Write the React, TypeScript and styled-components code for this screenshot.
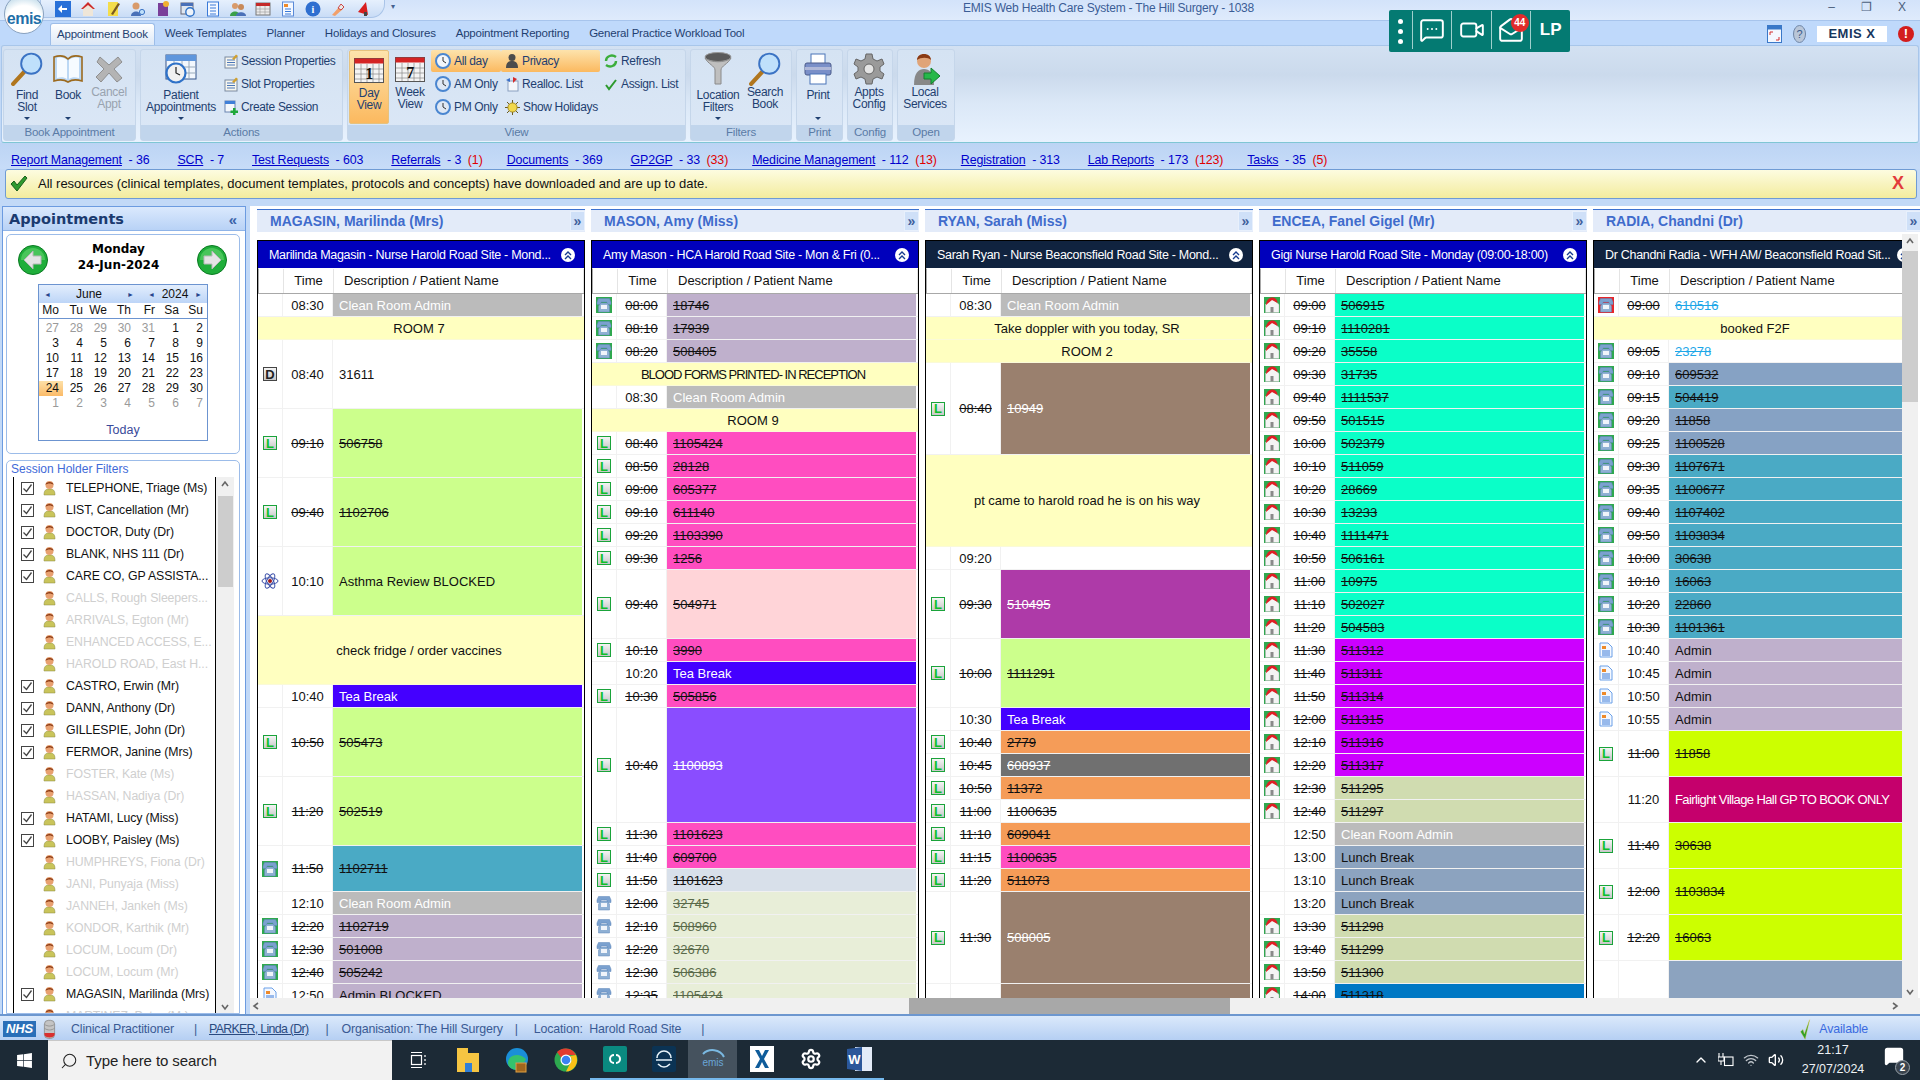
import React from "react";
import styled, { createGlobalStyle } from "styled-components";
import {
  ChevronUp,
  MailOpen,
  MessageSquareMore,
  Search,
  Settings,
  Video,
  Volume2,
  Wifi
} from "lucide-react";
import { FaWindows } from "react-icons/fa";

const GlobalStyle = createGlobalStyle`
  html, body {
    margin: 0;
    padding: 0;
    overflow: hidden;
    background: #c2d9f7;
  }
  * { box-sizing: border-box; }
`;

const FONT = `"Liberation Sans", Arial, sans-serif`;
const WIDE = `"DejaVu Sans", Verdana, sans-serif`;

/* ---------- shell ---------- */

const Page = styled.div`
  position: relative;
  width: 1920px;
  height: 1080px;
  display: flex;
  flex-direction: column;
  overflow: hidden;
  font-family: ${FONT};
  font-size: 13px;
  background: #c2d9f7;
`;

const TitleBar = styled.div`
  height: 20px;
  flex: none;
  display: flex;
  align-items: flex-start;
  padding-left: 40px;
  background: linear-gradient(#d3e3fa, #dfebfc);
`;

const QuickBar = styled.div`
  width: 345px;
  height: 18px;
  display: flex;
  align-items: center;
  gap: 9px;
  padding-left: 14px;
  border: 1px solid #a9c4e8;
  border-top: none;
  border-radius: 0 0 14px 0;
  background: linear-gradient(#e6f0fd, #c9dcf6);
`;

const QuickArrow = styled.span`
  margin: 0 0 0 6px;
  font-size: 8px;
  color: #44618f;
  line-height: 14px;
`;

const WindowTitle = styled.div`
  margin-left: 568px;
  width: 300px;
  line-height: 16px;
  font-size: 12px;
  letter-spacing: -0.2px;
  color: #3b5d96;
  white-space: nowrap;
`;

const WindowControls = styled.div`
  margin-left: auto;
  display: flex;
  gap: 26px;
  padding-right: 14px;
  color: #4b5f7d;
  font-size: 12px;
  line-height: 15px;
`;

const TabRow = styled.div`
  height: 25px;
  flex: none;
  display: flex;
  align-items: flex-end;
  padding-left: 50px;
  border-top: 1px solid #a7c4ec;
  background: #bfd9fb;
`;

const Tab = styled.div<{ $active?: boolean }>`
  height: 22px;
  padding: 0 ${p => (p.$active ? 6 : 10)}px;
  line-height: 21px;
  font-size: 11.5px;
  letter-spacing: -0.2px;
  white-space: nowrap;
  color: #1f3f70;
  ${p =>
    p.$active &&
    `
    background: linear-gradient(#ffffff, #dce8f7);
    border: 1px solid #9dbde8;
    border-bottom: none;
    border-radius: 3px 3px 0 0;
  `}
`;

const TabTools = styled.div`
  margin-left: auto;
  height: 22px;
  display: flex;
  align-items: center;
  gap: 11px;
  padding-right: 6px;
`;

const EmisXBox = styled.div`
  width: 70px;
  height: 16px;
  background: #fff;
  text-align: center;
  line-height: 16px;
  font-size: 13px;
  font-weight: 700;
  letter-spacing: 0.5px;
  color: #17375e;
`;

const AlertDot = styled.div`
  width: 16px;
  height: 16px;
  border-radius: 50%;
  background: #d31d1d;
  color: #fff;
  text-align: center;
  font-weight: 700;
  font-size: 13px;
  line-height: 16px;
`;

const Orb = styled.div`
  position: absolute;
  left: 4px;
  top: -6px;
  width: 40px;
  height: 40px;
  border-radius: 50%;
  border: 1px solid #8aa2bf;
  background: radial-gradient(circle at 50% 80%, #ffffff 0 55%, #9dc6dd 100%);
  text-align: center;
  font-size: 16px;
  line-height: 48px;
  letter-spacing: -0.5px;
  font-weight: 700;
  color: #1f6fa8;
`;

const TealWidget = styled.div`
  position: absolute;
  left: 1389px;
  top: 10px;
  width: 181px;
  height: 42px;
  display: flex;
  background: #047a72;
  border-radius: 2px;
  color: #fff;
`;

const TealDots = styled.div`
  width: 23px;
  display: flex;
  flex-direction: column;
  align-items: center;
  justify-content: center;
  gap: 5px;
`;

const TealDot = styled.span`
  width: 5px;
  height: 5px;
  border-radius: 50%;
  background: #fff;
`;

const TealCell = styled.div`
  position: relative;
  width: 40px;
  display: flex;
  align-items: center;
  justify-content: center;
  border-left: 1px solid #9fd0cc;
  margin: 1px 0 3px;
  font-size: 17px;
  font-weight: 700;
`;

const TealBadge = styled.span`
  position: absolute;
  left: 19px;
  top: 3px;
  width: 18px;
  height: 18px;
  border-radius: 50%;
  background: #e02b2b;
  font-size: 10px;
  line-height: 18px;
  text-align: center;
`;

/* ---------- ribbon ---------- */

const Ribbon = styled.div`
  height: 98px;
  flex: none;
  margin: 0 1px 0 1px;
  padding: 3px 0 2px 1px;
  display: flex;
  gap: 4px;
  border: 1px solid #a8c6ea;
  border-bottom: 1px solid #7fc6d4;
  border-radius: 3px;
  background: linear-gradient(#d3e1f2 0, #cbdaec 30%, #dbe8f7 60%, #e8f2fe 100%);
`;

const Group = styled.div<{ $w: number }>`
  width: ${p => p.$w}px;
  height: 92px;
  flex: none;
  display: flex;
  flex-direction: column;
  border: 1px solid #c5d6ea;
  border-radius: 3px;
  background: linear-gradient(#d5e3f3, #dbe7f6);
`;

const GroupBody = styled.div`
  flex: 1;
  display: flex;
  padding: 0 0 0 1px;
`;

const GroupLabel = styled.div`
  height: 15px;
  text-align: center;
  line-height: 15px;
  font-size: 11.5px;
  letter-spacing: -0.2px;
  color: #5a7ba6;
  background: #c1d5ec;
`;

const BigButton = styled.div<{ $w: number; $on?: boolean; $off?: boolean }>`
  width: ${p => p.$w}px;
  height: 74px;
  flex: none;
  display: flex;
  flex-direction: column;
  align-items: center;
  padding-top: 2px;
  font-size: 12px;
  letter-spacing: -0.3px;
  line-height: 12px;
  text-align: center;
  color: ${p => (p.$off ? "#98a3af" : "#1f3f70")};
  ${p =>
    p.$on &&
    `
    background: linear-gradient(#fde3ac, #fbb95f);
    border: 1px solid #e6c27e;
    border-radius: 2px;
  `}
`;

const BigIcon = styled.div<{ $low?: boolean }>`
  height: 34px;
  flex: none;
  display: flex;
  align-items: center;
  justify-content: center;
  margin-bottom: ${p => (p.$low ? 3 : 0)}px;
`;

const DropArrow = styled.span`
  width: 0;
  height: 0;
  margin-top: 4px;
  border-left: 3px solid transparent;
  border-right: 3px solid transparent;
  border-top: 3px solid #1f3f70;
`;

const SmallColumn = styled.div<{ $w: number }>`
  width: ${p => p.$w}px;
  flex: none;
  display: flex;
  flex-direction: column;
  gap: 1px;
`;

const SmallButton = styled.div<{ $on?: boolean }>`
  height: 22px;
  display: flex;
  align-items: center;
  gap: 3px;
  padding-left: 4px;
  font-size: 12px;
  letter-spacing: -0.35px;
  white-space: nowrap;
  color: #1f3f70;
  ${p =>
    p.$on &&
    `
    background: linear-gradient(#fde3ac, #fbb95f);
    border-radius: 2px;
  `}
`;

/* ---------- message links ---------- */

const LinkRow = styled.div`
  height: 26px;
  flex: none;
  display: flex;
  align-items: flex-end;
  padding: 0 0 2px 11px;
  font-size: 12.4px;
  letter-spacing: -0.12px;
  background: linear-gradient(#bcd4f4, #c7dcf8);
  color: #0000cc;
`;

const LinkItem = styled.span<{ $urgent?: boolean }>`
  margin-right: ${p => (p.$urgent ? 24 : 28)}px;
  white-space: pre;
`;

const MsgLink = styled.a`
  color: #0000cc;
  text-decoration: underline;
`;

const Urgent = styled.span`
  color: #e00000;
`;

const Banner = styled.div`
  height: 30px;
  flex: none;
  margin: 0 3px 0 5px;
  display: flex;
  align-items: center;
  padding: 0 12px 2px 4px;
  gap: 10px;
  border: 1px solid #6f9bd4;
  border-radius: 3px;
  background: linear-gradient(#fdfce0, #f3ec9e);
  color: #111;
  font-size: 13px;
`;

const BannerClose = styled.span`
  margin-left: auto;
  color: #e23b3b;
  font-size: 18px;
  font-weight: 700;
`;

/* ---------- work area ---------- */

const Work = styled.div`
  flex: 1;
  min-height: 0;
  display: flex;
  padding-top: 7px;
`;

const Sidebar = styled.div`
  width: 244px;
  margin-left: 2px;
  flex: none;
  height: 809px;
  display: flex;
  flex-direction: column;
  border: 1px solid #6c9be0;
  background: #fff;
`;

const SideHead = styled.div`
  height: 24px;
  flex: none;
  display: flex;
  align-items: center;
  justify-content: space-between;
  padding: 1px 8px 0 6px;
  border-bottom: 1px solid #8fb4e8;
  background: linear-gradient(#dbe9fd, #b8d2f6);
  font-family: ${WIDE};
  font-weight: 700;
  font-size: 14.5px;
  color: #1b3a6f;
`;

const SideChevron = styled.span`
  font-family: ${FONT};
  font-size: 15px;
  color: #3a62a8;
`;

const DateCard = styled.div`
  height: 220px;
  flex: none;
  margin: 3px 5px 6px 3px;
  padding: 6px 0 0 10px;
  border: 1px solid #9cbce9;
  border-radius: 5px;
`;

const DateHead = styled.div`
  width: 210px;
  height: 43px;
  display: flex;
  align-items: flex-start;
  justify-content: space-between;
  padding: 0 0 0 1px;
`;

const ArrowSlot = styled.div`
  margin-top: 4px;
  line-height: 0;
`;

const DateText = styled.div`
  margin-right: 8px;
  text-align: center;
  font-family: ${WIDE};
  font-weight: 700;
  font-size: 12px;
  line-height: 16px;
  color: #000;
`;

const Calendar = styled.div`
  width: 170px;
  height: 157px;
  margin-left: 21px;
  border: 1px solid #6c94d0;
`;

const MonthBar = styled.div`
  height: 18px;
  display: flex;
  align-items: center;
  justify-content: space-between;
  padding: 0 5px 0 5px;
  background: linear-gradient(#e3eefd, #bdd5f7);
  font-size: 12px;
  color: #111;
`;

const MonthPart = styled.div<{ $w: number }>`
  width: ${p => p.$w}px;
  display: flex;
  align-items: center;
  justify-content: space-between;
`;

const MonthArrow = styled.span`
  font-size: 7px;
  color: #27458c;
`;

const DayGrid = styled.div<{ $head?: boolean }>`
  display: grid;
  grid-template-columns: repeat(7, 24px);
  grid-auto-rows: 15px;
  ${p => p.$head && "height: 16px; border-bottom: 1px solid #6c94d0;"}
  ${p => !p.$head && "padding-top: 2px;"}
`;

const Day = styled.div<{ $muted?: boolean; $today?: boolean }>`
  text-align: right;
  padding-right: 4px;
  font-size: 12px;
  line-height: 15px;
  color: ${p => (p.$muted ? "#9a9a9a" : "#111")};
  ${p => p.$today && "background: linear-gradient(#fde0a8, #fbbb68);"}
`;

const TodayLink = styled.div`
  margin-top: 12px;
  text-align: center;
  font-size: 12.5px;
  color: #3a4a9a;
`;

const FilterCard = styled.div`
  flex: 1;
  min-height: 0;
  margin: 0 5px 0 3px;
  display: flex;
  flex-direction: column;
  border: 1px solid #9cbce9;
  border-radius: 5px 5px 0 0;
  overflow: hidden;
`;

const FilterTitle = styled.div`
  height: 16px;
  flex: none;
  padding-left: 4px;
  font-size: 12px;
  line-height: 17px;
  color: #3f6ad8;
`;

const FilterBody = styled.div`
  flex: 1;
  min-height: 0;
  display: flex;
  margin-left: 6px;
`;

const HolderList = styled.div`
  width: 203px;
  flex: none;
  overflow: hidden;
  border-left: 1px solid #000;
  border-right: 1px solid #000;
`;

const Holder = styled.div<{ $off?: boolean }>`
  height: 22px;
  display: flex;
  align-items: center;
  padding-left: 7px;
  font-size: 12.3px;
  letter-spacing: -0.1px;
  white-space: nowrap;
  color: ${p => (p.$off ? "#cfcfcf" : "#111")};
`;

const Tick = styled.span<{ $show: boolean }>`
  width: 13px;
  height: 13px;
  flex: none;
  margin-right: 9px;
  display: flex;
  align-items: center;
  justify-content: center;
  ${p => p.$show && "border: 1px solid #444;"}
`;

const HolderName = styled.span`
  margin-left: 10px;
`;

const SideScroll = styled.div`
  width: 18px;
  flex: none;
  display: flex;
  flex-direction: column;
  align-items: center;
  background: #f0f0f0;
  color: #555;
`;

const SideThumb = styled.div`
  width: 15px;
  height: 91px;
  margin-top: 6px;
  background: #cdcdcd;
`;

const GridArea = styled.div`
  flex: 1;
  min-width: 0;
  margin-left: 4px;
  display: flex;
  flex-direction: column;
  background: #fff;
  height: 808px;
`;

const NameRow = styled.div`
  height: 28px;
  flex: none;
  display: flex;
  gap: 6px;
  padding-left: 7px;
  overflow: hidden;
`;

const NameHead = styled.div`
  width: 328px;
  height: 23px;
  margin-top: 3px;
  flex: none;
  display: flex;
  align-items: center;
  justify-content: space-between;
  padding-left: 13px;
  border-top: 1px solid #3b71d0;
  background: #e3ebf9;
  font-weight: 700;
  font-size: 14px;
  color: #3f6bcc;
`;

const NameChevron = styled.span`
  width: 15px;
  height: 20px;
  text-align: center;
  line-height: 18px;
  font-size: 14px;
  background: #cfe0f8;
  border: 1px solid #e8f0fc;
  color: #3f5f9c;
`;

const BodyRow = styled.div`
  flex: 1;
  min-height: 0;
  display: flex;
`;

const ColumnsClip = styled.div`
  flex: 1;
  min-width: 0;
  display: flex;
  gap: 6px;
  padding: 6px 0 0 7px;
  overflow: hidden;
`;

const VScroll = styled.div`
  width: 16px;
  margin-right: 2px;
  flex: none;
  display: flex;
  flex-direction: column;
  align-items: center;
  background: #f0f0f0;
  color: #555;
`;

const VThumb = styled.div`
  width: 16px;
  height: 151px;
  margin-top: 4px;
  background: #cdcdcd;
`;

const ScrollGap = styled.div`
  flex: 1;
`;

const ScrollArrow = styled.div`
  height: 13px;
  display: flex;
  align-items: center;
  justify-content: center;
`;

const HScroll = styled.div`
  height: 16px;
  flex: none;
  display: flex;
  align-items: center;
  background: #f0f0f0;
  color: #555;
`;

const HThumb = styled.div`
  width: 321px;
  height: 16px;
  margin-left: 648px;
  background: #a8a8a8;
`;

const HArrowRight = styled.div`
  margin-left: auto;
  margin-right: 20px;
  display: flex;
`;

const HArrowLeft = styled.div`
  margin-left: 1px;
  display: flex;
`;

const Column = styled.div`
  width: 328px;
  flex: none;
  display: flex;
  flex-direction: column;
  overflow: hidden;
  border-left: 1px solid #000;
  border-right: 1px solid #000;
  background: #fff;
`;

const SlotTitle = styled.div<{ $navy?: boolean }>`
  height: 28px;
  flex: none;
  display: flex;
  align-items: center;
  justify-content: space-between;
  padding: 0 9px 0 11px;
  border-top: 1px solid #000;
  color: #fff;
  font-size: 12.5px;
  letter-spacing: -0.3px;
  white-space: nowrap;
  background: ${p => (p.$navy ? "#10233f" : "#0000bc")};
`;

const Collapse = styled.span`
  width: 14px;
  height: 14px;
  flex: none;
  border-radius: 50%;
  background: #fff;
  display: flex;
  align-items: center;
  justify-content: center;
`;

const HeadRow = styled.div`
  height: 26px;
  flex: none;
  display: grid;
  grid-template-columns: 25px 50px 1fr;
  border-top: 1px solid #fff;
  border-left: 1px solid #a8a8a8;
  border-bottom: 1px solid #a8a8a8;
  font-size: 13px;
  line-height: 24px;
  color: #111;
`;

const HeadCell = styled.div<{ $pad?: number }>`
  border-right: 1px solid #e4e4e4;
  text-align: ${p => (p.$pad ? "left" : "center")};
  padding-left: ${p => p.$pad ?? 0}px;
`;

const Slot = styled.div<{ $span: number }>`
  height: ${p => p.$span * 23}px;
  flex: none;
  display: grid;
  grid-template-columns: 25px 50px 1fr;
  border-bottom: 1px solid #f1f1f1;
`;

const IconCell = styled.div`
  display: flex;
  align-items: center;
  justify-content: center;
  border-right: 1px solid #f1f1f1;
`;

const TimeCell = styled.div<{ $struck?: boolean }>`
  display: flex;
  align-items: center;
  justify-content: center;
  border-right: 1px solid #f1f1f1;
  color: #111;
  font-size: 13px;
  ${p => p.$struck && "text-decoration: line-through;"}
`;

const DescCell = styled.div<{ $bg: string; $fg: string; $struck?: boolean; $tight?: boolean }>`
  display: flex;
  align-items: center;
  margin-right: 2px;
  padding-left: 6px;
  background: ${p => p.$bg};
  color: ${p => p.$fg};
  font-size: 13px;
  white-space: nowrap;
  ${p => p.$tight && "letter-spacing: -0.6px;"}
  ${p => p.$struck && "text-decoration: line-through;"}
`;

const NoteRow = styled.div<{ $span: number; $tight?: boolean }>`
  height: ${p => p.$span * 23}px;
  flex: none;
  display: flex;
  align-items: center;
  justify-content: center;
  padding-right: 4px;
  background: #ffffc0;
  border-bottom: 1px solid #fafad8;
  color: #111;
  font-size: 13px;
  ${p => p.$tight && "letter-spacing: -1px;"}
`;

const LetterIcon = styled.span<{ $grey?: boolean }>`
  width: 14px;
  height: 14px;
  display: flex;
  align-items: center;
  justify-content: center;
  border: 1px solid ${p => (p.$grey ? "#444" : "#1aa33a")};
  background: linear-gradient(#f4f4f4, #c8c8c8);
  font-size: 13px;
  font-weight: 700;
  color: ${p => (p.$grey ? "#222" : "#0cc02a")};
`;

/* ---------- status and task bars ---------- */

const StatusBar = styled.div`
  height: 26px;
  flex: none;
  display: flex;
  align-items: center;
  padding: 2px 52px 0 3px;
  border-top: 2px solid #6d97cf;
  background: linear-gradient(#dbe9fb, #b5cff3);
  font-size: 12.4px;
  letter-spacing: -0.15px;
  color: #3a5a94;
`;

const NhsBox = styled.span`
  width: 33px;
  height: 16px;
  flex: none;
  margin-right: 6px;
  background: #2a6fb8;
  color: #fff;
  font-weight: 700;
  font-style: italic;
  font-size: 13px;
  line-height: 16px;
  text-align: center;
`;

const StatusText = styled.span<{ $ml: number }>`
  margin-left: ${p => p.$ml}px;
  white-space: pre;
`;

const StatusLink = styled(StatusText)`
  text-decoration: underline;
  letter-spacing: -0.7px;
  color: #2a4a80;
`;

const StatusAvailable = styled.span`
  margin-left: auto;
  display: flex;
  align-items: center;
  gap: 7px;
  color: #3a6ae0;
`;

const TaskBar = styled.div`
  height: 40px;
  flex: none;
  display: flex;
  align-items: center;
  background: #1c2a36;
  color: #fff;
`;

const StartButton = styled.div`
  width: 48px;
  height: 40px;
  flex: none;
  display: flex;
  align-items: center;
  justify-content: center;
`;

const SearchBox = styled.div`
  width: 344px;
  height: 40px;
  flex: none;
  display: flex;
  align-items: center;
  gap: 8px;
  padding-left: 12px;
  background: #f2f2f2;
  border-top: 1px solid #c8c8c8;
  color: #222;
  font-size: 15px;
  letter-spacing: -0.1px;
`;

const TaskIcons = styled.div`
  display: flex;
  margin-left: 2px;
`;

const TaskSlot = styled.div<{ $w?: number; $run?: boolean; $active?: boolean }>`
  width: ${p => p.$w ?? 49}px;
  height: 40px;
  display: flex;
  align-items: center;
  justify-content: center;
  ${p => p.$active && "background: #45525e;"}
  ${p => p.$run && "border-bottom: 2px solid #76b9ed;"}
`;

const Tray = styled.div`
  margin-left: auto;
  display: flex;
  align-items: center;
  gap: 9px;
  padding-right: 12px;
`;

const Clock = styled.div`
  width: 72px;
  margin-left: 4px;
  text-align: center;
  font-size: 12.5px;
  line-height: 19px;
  color: #eef2f5;
`;

const NotifyIcon = styled.div`
  position: relative;
  width: 24px;
  height: 28px;
  margin-left: 6px;
`;

const NotifyBadge = styled.span`
  position: absolute;
  right: -2px;
  bottom: -1px;
  width: 15px;
  height: 15px;
  border-radius: 50%;
  background: #3a444e;
  border: 1px solid #9aa3ab;
  font-size: 10px;
  font-weight: 700;
  line-height: 13px;
  text-align: center;
`;

/* ---------- drawn icons ---------- */

const PhoneIcon = ({ red, plain }: { red?: boolean; plain?: boolean }) => (
  <svg width="16" height="16" viewBox="0 0 16 16">
    {!plain && <rect width="16" height="16" fill={red ? "#e6252a" : "#2fa84f"} />}
    <path d="M1 5 L2.5 1.5 H13.5 L15 5 V7.5 H11 V5 H5 V7.5 H1 Z" fill="#7ba1cf" stroke="#5f86b8" strokeWidth="0.5" />
    <path d="M2.5 9 L5 6 H11 L13.5 9 V15 H2.5 Z" fill="#8fb0d4" stroke="#5f86b8" strokeWidth="0.5" />
    <rect x="5" y="8" width="6" height="4" fill="#f0f4fa" />
  </svg>
);

const HouseIcon = () => (
  <svg width="16" height="16" viewBox="0 0 16 16">
    <rect width="16" height="16" fill="#2fa84f" />
    <path d="M8 1 L15 7.5 V15.5 H1.5 V7.5 Z" fill="#f4f4f4" stroke="#b8b8b8" strokeWidth="0.5" />
    <path d="M2 8 C2 3.5 5 0.5 8 0.5 C11 0.5 13.5 2.5 13.5 6 L8 3 Z" fill="#e01f25" />
    <rect x="6.5" y="10" width="3" height="5.5" fill="#8a8a8a" />
  </svg>
);

const AtomIcon = () => (
  <svg width="18" height="18" viewBox="0 0 18 18" fill="none" stroke="#3a4ea8" strokeWidth="1">
    <ellipse cx="9" cy="9" rx="8" ry="3.2" transform="rotate(60 9 9)" />
    <ellipse cx="9" cy="9" rx="8" ry="3.2" transform="rotate(-60 9 9)" />
    <ellipse cx="9" cy="9" rx="8" ry="3.2" />
    <circle cx="9" cy="9" r="2" fill="#a01818" stroke="none" />
  </svg>
);

const DocIcon = () => (
  <svg width="14" height="16" viewBox="0 0 14 16">
    <path d="M1 1 H9 L13 5 V15 H1 Z" fill="#f4f8ff" stroke="#6aa0e8" />
    <rect x="3" y="4" width="4" height="3" fill="#ee8a2a" />
    <path d="M3 9 H11 M3 11 H11 M3 13 H11" stroke="#3a7ad8" />
  </svg>
);

const ChevronsUp = () => (
  <svg width="10" height="10" viewBox="0 0 10 10" fill="none" stroke="#173c8f" strokeWidth="1.4">
    <path d="M2 5 L5 2 L8 5 M2 9 L5 6 L8 9" />
  </svg>
);

const Caret = ({ dir }: { dir: "up" | "down" | "left" | "right" }) => {
  const d = {
    up: "M2 7 L5 3 L8 7",
    down: "M2 3 L5 7 L8 3",
    left: "M7 2 L3 5 L7 8",
    right: "M3 2 L7 5 L3 8"
  }[dir];
  return (
    <svg width="10" height="10" viewBox="0 0 10 10" fill="none" stroke="#666" strokeWidth="1.6">
      <path d={d} />
    </svg>
  );
};

const UserIcon = () => (
  <svg width="13" height="16" viewBox="0 0 13 16">
    <path d="M1 15 C1 10 3 9 6.5 9 C10 9 12 10 12 15 Z" fill="#c9c45a" stroke="#8a8a40" strokeWidth="0.5" />
    <circle cx="6.5" cy="5" r="4" fill="#e8a070" />
    <path d="M2.5 5 C2.5 1 10.5 1 10.5 5 C9 3 4 3 2.5 5 Z" fill="#8a3a14" />
  </svg>
);

const CheckMark = () => (
  <svg width="11" height="11" viewBox="0 0 11 11" fill="none" stroke="#444" strokeWidth="1.3">
    <path d="M1.5 5.5 L4.5 8.5 L9.5 1.5" />
  </svg>
);

const GreenArrow = ({ right }: { right?: boolean }) => (
  <svg width="30" height="30" viewBox="0 0 30 30">
    <circle cx="15" cy="15" r="14.5" fill="#1fae3a" stroke="#0a7a22" />
    <path d="M3 15 A12 12 0 0 1 27 15 Z" fill="#66d36f" opacity="0.6" />
    <path
      d={right ? "M7 11 H15 V6 L24 15 L15 24 V19 H7 Z" : "M23 11 H15 V6 L6 15 L15 24 V19 H23 Z"}
      fill="#e4e4e4"
      stroke="#b8b8b8"
    />
  </svg>
);

const Lens = ({ size = 34 }: { size?: number }) => (
  <svg width={size} height={size} viewBox="0 0 32 32">
    <path d="M14 18 L3 30" stroke="#b0761e" strokeWidth="4" strokeLinecap="round" />
    <circle cx="20" cy="11" r="9.5" fill="#bfe0fb" stroke="#3b73c4" strokeWidth="1.8" />
  </svg>
);

const BookIcon = () => (
  <svg width="32" height="32" viewBox="0 0 32 32">
    <path d="M2 4 C8 2 13 3 16 6 C19 3 24 2 30 4 V28 C24 26 19 27 16 29 C13 27 8 26 2 28 Z" fill="#bcd8f4" stroke="#9c6a1e" strokeWidth="1.6" />
    <path d="M5 5 C9 4 13 5 15 7 V26 C12 24 9 24 5 25 Z M27 5 C23 4 19 5 17 7 V26 C20 24 23 24 27 25 Z" fill="#f6fbff" />
  </svg>
);

const CrossIcon = () => (
  <svg width="30" height="30" viewBox="0 0 30 30">
    <path d="M6 3 L15 11 L24 3 L28 8 L20 15 L28 24 L23 28 L15 19 L7 28 L2 23 L10 15 L3 8 Z" fill="#b4b4b4" stroke="#8f8f8f" />
  </svg>
);

const CalendarClock = () => (
  <svg width="32" height="30" viewBox="0 0 32 30">
    <rect x="1" y="1" width="30" height="24" fill="#f2f7fd" stroke="#34558c" />
    <rect x="1" y="1" width="30" height="6" fill="#5f96dc" />
    <path d="M1 13 H31 M1 19 H31 M9 7 V25 M17 7 V25 M24 7 V25" stroke="#9ab" />
    <circle cx="11" cy="19" r="9.5" fill="#f1f1f1" stroke="#2f72c8" strokeWidth="2.2" />
    <path d="M11 13 V19 L15 21" stroke="#222" strokeWidth="1.2" fill="none" />
  </svg>
);

const PlannerIcon = ({ label }: { label: string }) => (
  <svg width="30" height="25" viewBox="0 0 30 25">
    <rect x="0.5" y="0.5" width="29" height="24" fill="#f4f4f4" stroke="#555" />
    <rect x="0.5" y="0.5" width="29" height="5" fill="#d42424" />
    <path d="M1 11 H29 M1 16 H29 M1 21 H29 M7 6 V24 M13 6 V24 M19 6 V24 M25 6 V24" stroke="#888" strokeWidth="0.7" />
    <text x="15" y="20.5" textAnchor="middle" fontSize="16" fontWeight="700" fontFamily="Liberation Serif, serif" fill="#111">
      {label}
    </text>
  </svg>
);

const SlotProps = () => (
  <svg width="14" height="15" viewBox="0 0 14 15">
    <rect x="1" y="3" width="12" height="11" fill="#f6f6f0" stroke="#7a8aa0" />
    <path d="M3 6 H11 M3 8.5 H11 M3 11 H11" stroke="#4a76b8" />
    <path d="M8 5 L12 0.5 L14 2 L10 6 Z" fill="#d0a030" />
  </svg>
);

const CreateIcon = () => (
  <svg width="14" height="15" viewBox="0 0 14 15">
    <rect x="1" y="1" width="10" height="11" fill="#f4f7fb" stroke="#6a84b0" />
    <rect x="1" y="1" width="10" height="3" fill="#3f7fd8" />
    <path d="M9 8 H11.5 V10.5 H14 V13 H11.5 V15 H9 V13 H6.5 V10.5 H9 Z" fill="#1fa83a" />
  </svg>
);

const ClockIcon = ({ half }: { half?: boolean }) => (
  <svg width="16" height="16" viewBox="0 0 16 16">
    <circle cx="8" cy="8" r="7" fill={half ? "#dfe8f4" : "#f2f6fb"} stroke="#4a86d0" strokeWidth="2" />
    <path d="M8 4 V8 L11 10" stroke="#333" fill="none" />
  </svg>
);

const PrivacyIcon = () => (
  <svg width="14" height="16" viewBox="0 0 14 16">
    <circle cx="7" cy="4.5" r="3.5" fill="#4c4c4c" />
    <path d="M1 15 C1 9 4 8 7 8 C10 8 13 9 13 15 Z" fill="#4c4c4c" />
  </svg>
);

const ReallocIcon = () => (
  <svg width="14" height="15" viewBox="0 0 14 15">
    <rect x="3" y="4" width="10" height="10" fill="#f4f7fb" stroke="#8aa0c0" />
    <path d="M1 3 L5 1 L5 5 Z" fill="#3a6fc8" />
    <path d="M12 2 L8 0 L8 6 Z" fill="#d42c2c" />
  </svg>
);

const SunIcon = () => (
  <svg width="15" height="15" viewBox="0 0 15 15">
    <path d="M7.5 0 V15 M0 7.5 H15 M2 2 L13 13 M13 2 L2 13" stroke="#6a5a20" />
    <circle cx="7.5" cy="7.5" r="4.6" fill="#f2d84a" stroke="#a58a20" />
  </svg>
);

const RefreshIcon = () => (
  <svg width="14" height="16" viewBox="0 0 14 16" fill="none" stroke="#3cae3c" strokeWidth="2.4">
    <path d="M2 8 C2 3 8 1 12 4" />
    <path d="M12 8 C12 13 6 15 2 12" />
  </svg>
);

const AssignTick = () => (
  <svg width="14" height="13" viewBox="0 0 14 13" fill="none" stroke="#2d9a2d" strokeWidth="2">
    <path d="M2 7 L5 11 L12 2" />
  </svg>
);

const FunnelIcon = () => (
  <svg width="30" height="34" viewBox="0 0 30 34">
    <ellipse cx="15" cy="5" rx="13" ry="4.5" fill="#5a5a5a" stroke="#999" />
    <path d="M2 6 C5 12 12 14 12 18 V32 H18 V18 C18 14 25 12 28 6 C22 11 8 11 2 6 Z" fill="#bfbfbf" stroke="#8a8a8a" />
  </svg>
);

const PrinterIcon = () => (
  <svg width="28" height="32" viewBox="0 0 28 32">
    <rect x="7" y="1" width="14" height="11" fill="#fff" stroke="#4b74b8" />
    <rect x="1" y="10" width="26" height="12" rx="2" fill="#7a8fc8" stroke="#4b5a8a" />
    <rect x="1" y="14" width="26" height="3" fill="#b0b8d8" />
    <rect x="6" y="21" width="16" height="10" fill="#fff" stroke="#4b74b8" />
  </svg>
);

const GearIcon = () => (
  <svg width="32" height="32" viewBox="0 0 32 32">
    <path
      d="M13 1 H19 L20 6 L24 8 L29 6 L31 11 L27 14 V18 L31 21 L29 26 L24 24 L20 26 L19 31 H13 L12 26 L8 24 L3 26 L1 21 L5 18 V14 L1 11 L3 6 L8 8 L12 6 Z"
      fill="#9a9a9a"
      stroke="#666"
    />
    <circle cx="16" cy="16" r="5" fill="#e4e4e4" stroke="#666" />
  </svg>
);

const LocalIcon = () => (
  <svg width="30" height="34" viewBox="0 0 30 34">
    <path d="M4 33 C4 20 9 17 14 17 C19 17 24 20 24 33 Z" fill="#888" />
    <circle cx="14" cy="9" r="7" fill="#e0a478" />
    <path d="M7 8 C7 0 21 0 21 8 C18 5 11 5 7 8 Z" fill="#8a3a14" />
    <path d="M14 21 H21 V16 L30 24 L21 32 V27 H14 Z" fill="#26b84a" stroke="#14802e" />
  </svg>
);

const QuickIcon = ({ kind }: { kind: number }) => {
  const art: React.ReactNode[] = [
    <g key="0"><rect width="16" height="16" fill="#2870d8" /><path d="M12 7 H7 V4 L3 8 L7 12 V9 H12 Z" fill="#fff" /></g>,
    <g key="1"><path d="M8 1 L15 8 H13 V15 H3 V8 H1 Z" fill="#efe6d8" /><path d="M8 1 L15 8 H13 L8 4 L3 8 H1 Z" fill="#cc2a2a" /></g>,
    <g key="2"><path d="M3 1 H13 V15 H3 Z" fill="#f4dd4a" /><path d="M6 13 L13 2 L15 3 L8 14 Z" fill="#7a5a20" /></g>,
    <g key="3"><circle cx="6" cy="5" r="3.5" fill="#d89a6a" /><path d="M1 15 C1 9 11 9 11 15 Z" fill="#4a70b8" /><circle cx="12" cy="11" r="2.6" fill="#bfe0fb" stroke="#3b73c4" /></g>,
    <g key="4"><rect x="3" y="2" width="10" height="13" fill="#7a3f9a" /><circle cx="11" cy="3" r="3" fill="#f0b030" /></g>,
    <g key="5"><rect x="1" y="2" width="12" height="11" fill="#dfe6f0" stroke="#667" /><rect x="1" y="2" width="12" height="3" fill="#4a70b8" /><circle cx="10" cy="11" r="4.2" fill="#eef3fa" stroke="#2f72c8" strokeWidth="1.4" /></g>,
    <g key="6"><rect x="2.5" y="1" width="11" height="14" fill="#f4f8ff" stroke="#3a7ad8" /><path d="M5 4 H11 M5 7 H11 M5 10 H11 M5 13 H11" stroke="#3a7ad8" /></g>,
    <g key="7"><circle cx="5" cy="5" r="3" fill="#d89a6a" /><circle cx="11" cy="6" r="3" fill="#c88a5a" /><path d="M0 15 C0 9 10 9 10 15 Z" fill="#3aa04a" /><path d="M6 15 C6 10 16 10 16 15 Z" fill="#4a70b8" /></g>,
    <g key="8"><rect x="1" y="2" width="14" height="12" fill="#ececec" stroke="#777" /><rect x="1" y="2" width="14" height="3" fill="#c42a2a" /><path d="M1 8 H15 M1 11 H15 M5 5 V14 M10 5 V14" stroke="#999" strokeWidth="0.6" /></g>,
    <g key="9"><rect x="2.5" y="1" width="11" height="14" fill="#f4f8ff" stroke="#5a8ad8" /><rect x="4" y="3" width="4" height="3" fill="#ee8a2a" /><path d="M5 8 H11 M5 10.5 H11 M5 13 H11" stroke="#3a7ad8" /></g>,
    <g key="10"><circle cx="8" cy="8" r="7.5" fill="#2f6fd0" /><text x="8" y="11.5" textAnchor="middle" fontSize="10" fontWeight="700" fontFamily="Liberation Serif, serif" fill="#fff">i</text></g>,
    <g key="11"><path d="M2 14 L10 5 L13 8 L5 15 Z" fill="#f2a06a" /><path d="M8 7 L11 3 L14 6 L11 9 Z" fill="#e8e8e8" stroke="#c44" /></g>,
    <g key="12"><path d="M11 1 L13 14 L3 11 Z" fill="#d81e1e" /><rect x="9" y="11" width="3" height="4" fill="#444" /></g>
  ];
  return (
    <svg width="16" height="16" viewBox="0 0 16 16">
      {art[kind]}
    </svg>
  );
};

const BlueCal = () => (
  <svg width="15" height="18" viewBox="0 0 15 18">
    <rect x="0.5" y="0.5" width="14" height="17" fill="#f4f8ff" stroke="#3a78c8" />
    <rect x="0.5" y="0.5" width="14" height="4" fill="#3a78c8" />
    <path d="M3 7 V10 M3 7 H6 M12 15 V12 M12 15 H9" stroke="#d42c2c" fill="none" />
  </svg>
);

const HelpDot = () => (
  <svg width="13" height="18" viewBox="0 0 13 18">
    <ellipse cx="6.5" cy="9" rx="6" ry="8.5" fill="#b9c6d8" stroke="#6f85a6" />
    <text x="6.5" y="13" textAnchor="middle" fontSize="11" fontFamily="Liberation Sans, sans-serif" fill="#3a5a8a">?</text>
  </svg>
);

const BannerTick = () => (
  <svg width="18" height="17" viewBox="0 0 18 17">
    <path d="M1 9 L4 6 L7 10 L15 1 L17 3 L7 16 Z" fill="#2f9a2f" stroke="#1b5f1b" />
  </svg>
);

const DbIcon = () => (
  <svg width="15" height="22" viewBox="0 0 15 28">
    <rect x="1" y="3" width="13" height="23" rx="5" fill="#c4c4c4" stroke="#8a8a8a" />
    <path d="M1 19 H14 V21 C14 26 1 26 1 21 Z" fill="#d83030" />
    <path d="M1 8 C5 11 10 11 14 8 M1 13 C5 16 10 16 14 13" stroke="#8a8a8a" fill="none" />
  </svg>
);

const AvailableTick = () => (
  <svg width="13" height="21" viewBox="0 0 15 28">
    <path d="M1 17 L4 14 L6 20 L13 1 L7 27 Z" fill="#2aa02a" stroke="#e0c030" strokeWidth="0.5" />
  </svg>
);

const ExplorerIcon = () => (
  <svg width="22" height="24" viewBox="0 0 22 24">
    <path d="M0 0 H11 V5 H22 V24 H0 Z" fill="#f5c542" />
    <rect x="8" y="15" width="7" height="9" fill="#2f7fd8" />
  </svg>
);

const EdgeIcon = () => (
  <svg width="24" height="26" viewBox="0 0 24 26">
    <circle cx="12" cy="12" r="11" fill="#1a8fd8" />
    <path d="M3 16 C3 8 14 5 21 12 C20 17 14 16 12 15 C10 17 9 22 13 23 C7 23 3 20 3 16 Z" fill="#35c26e" />
    <rect x="11" y="16" width="10" height="9" fill="#a0661e" stroke="#e0a040" />
  </svg>
);

const ChromeIcon = () => (
  <svg width="24" height="24" viewBox="0 0 24 24">
    <circle cx="12" cy="12" r="11.5" fill="#2da94f" />
    <path d="M12 .5 A11.5 11.5 0 0 1 22 7 H12 A5 5 0 0 0 7.4 10 L3 4 A11.5 11.5 0 0 1 12 .5 Z" fill="#e33b2e" />
    <path d="M22 7 A11.5 11.5 0 0 1 12 23.5 L16.5 14.5 A5 5 0 0 0 16 8 Z" fill="#fbc116" />
    <circle cx="12" cy="12" r="5.5" fill="#fff" />
    <circle cx="12" cy="12" r="4.3" fill="#3b82f3" />
  </svg>
);

const TealApp = () => (
  <svg width="24" height="26" viewBox="0 0 24 26">
    <rect width="24" height="26" rx="2" fill="#0a8a80" />
    <path d="M11 9 A4 4 0 1 0 11 17 M13 9 A4 4 0 1 1 13 17" stroke="#fff" strokeWidth="2" fill="none" />
  </svg>
);

const NavyApp = () => (
  <svg width="24" height="26" viewBox="0 0 24 26">
    <rect width="24" height="26" rx="2" fill="#0b3354" />
    <path d="M5 12 A7 7 0 0 1 19 12 M4 14 H20 M6 18 C10 22 14 22 18 18" stroke="#e8f4fa" strokeWidth="1.6" fill="none" />
  </svg>
);

const EmisApp = () => (
  <svg width="26" height="26" viewBox="0 0 26 26">
    <path d="M3 8 C9 2 20 3 24 11" stroke="#7ab8e0" strokeWidth="2" fill="none" />
    <text x="13" y="20" textAnchor="middle" fontSize="10" fontFamily="Liberation Sans, sans-serif" fill="#6aa6d8">emis</text>
  </svg>
);

const WordIcon = () => (
  <svg width="26" height="26" viewBox="0 0 26 26">
    <rect x="8" y="1" width="17" height="24" fill="#e4ecf8" />
    <path d="M0 3 L15 1 V25 L0 23 Z" fill="#2b579a" />
    <text x="7.5" y="18" textAnchor="middle" fontSize="13" fontWeight="700" fontFamily="Liberation Sans, sans-serif" fill="#fff">W</text>
  </svg>
);

const XApp = () => (
  <svg width="24" height="26" viewBox="0 0 24 26">
    <rect width="24" height="26" fill="#fff" />
    <path d="M5 4 H9 L12 10 L15 4 H19 L14 13 L19 22 H15 L12 16 L9 22 H5 L10 13 Z" fill="#0f5c9a" />
  </svg>
);

const TaskViewIcon = () => (
  <svg width="18" height="18" viewBox="0 0 18 18" fill="none" stroke="#fff" strokeWidth="1.2">
    <rect x="1.5" y="4.5" width="10" height="9" />
    <path d="M1 1.5 H12 M1 16.5 H12 M15 4 V6 M15 8 V10 M15 12 V14" />
  </svg>
);

const PlugIcon = () => (
  <svg width="16" height="16" viewBox="0 0 16 16" fill="none" stroke="#fff" strokeWidth="1.1">
    <path d="M1 1 V5 M5 1 V5 M0 5 H6 V9 H0 Z M3 9 V13" />
    <rect x="6.5" y="5" width="8.5" height="8.5" />
  </svg>
);

/* ---------- data ---------- */

type Kind = "L" | "D" | "phone" | "phonePlain" | "phoneRed" | "house" | "atom" | "doc" | "";

interface Row {
  note?: string;
  icon?: Kind;
  time?: string;
  text?: string;
  bg?: string;
  fg?: string;
  span?: number;
  tight?: boolean;
}

const WHITE = "#ffffff";
const GREY = "#bbbbbb";
const MAUVE = "#bfb0cc";
const LEAF = "#ccff8c";
const PINK = "#ff4dc0";
const TEA = "#4400ff";
const TEAL = "#4aaac5";
const BROWN = "#9a806e";
const ORANGE = "#f59c58";
const MINT = "#0affc8";
const VIOLET = "#cc00ff";
const SAGE = "#d0dcb0";
const SLATE = "#8ca3bf";
const DUSK = "#86a2c4";
const LIME = "#ccff00";
const PALE = "#e8eed8";

const row = (icon: Kind, time: string, text: string, bg: string, span = 1, fg = "#111"): Row => ({
  icon,
  time,
  text,
  bg,
  span,
  fg
});
const note = (text: string, span = 1, tight = false): Row => ({ note: text, span, tight });
const clean = (time: string) => row("", time, "Clean Room Admin", GREY, 1, "#fff");
const tea = (time: string) => row("", time, "Tea Break", TEA, 1, "#fff");

const columns: { name: string; title: string; navy?: boolean; rows: Row[] }[] = [
  {
    name: "MAGASIN, Marilinda (Mrs)",
    title: "Marilinda Magasin - Nurse Harold Road Site - Mond...",
    rows: [
      clean("08:30"),
      note("ROOM 7"),
      row("D", "08:40", "31611", WHITE, 3),
      row("L", "09:10", "506758", LEAF, 3),
      row("L", "09:40", "1102706", LEAF, 3),
      row("atom", "10:10", "Asthma Review BLOCKED", LEAF, 3),
      note("check fridge / order vaccines", 3),
      tea("10:40"),
      row("L", "10:50", "505473", LEAF, 3),
      row("L", "11:20", "502519", LEAF, 3),
      row("phone", "11:50", "1102711", TEAL, 2),
      clean("12:10"),
      row("phone", "12:20", "1102719", MAUVE),
      row("phone", "12:30", "501008", MAUVE),
      row("phone", "12:40", "505242", MAUVE),
      row("doc", "12:50", "Admin BLOCKED", MAUVE)
    ]
  },
  {
    name: "MASON, Amy (Miss)",
    title: "Amy Mason - HCA Harold Road Site - Mon & Fri (0...",
    rows: [
      row("phone", "08:00", "18746", MAUVE),
      row("phone", "08:10", "17939", MAUVE),
      row("phone", "08:20", "508405", MAUVE),
      note("BLOOD FORMS PRINTED- IN RECEPTION", 1, true),
      clean("08:30"),
      note("ROOM 9"),
      row("L", "08:40", "1105424", PINK),
      row("L", "08:50", "28128", PINK),
      row("L", "09:00", "605377", PINK),
      row("L", "09:10", "611140", PINK),
      row("L", "09:20", "1103390", PINK),
      row("L", "09:30", "1256", PINK),
      row("L", "09:40", "504971", "#ffd4d8", 3),
      row("L", "10:10", "3990", PINK),
      tea("10:20"),
      row("L", "10:30", "505856", PINK),
      row("L", "10:40", "1100893", "#8a4dff", 5, "#fff"),
      row("L", "11:30", "1101623", PINK),
      row("L", "11:40", "609700", PINK),
      row("L", "11:50", "1101623", "#d8e0ea"),
      row("phonePlain", "12:00", "32745", PALE, 1, "#5a6a4a"),
      row("phonePlain", "12:10", "508960", PALE, 1, "#5a6a4a"),
      row("phonePlain", "12:20", "32670", PALE, 1, "#5a6a4a"),
      row("phonePlain", "12:30", "506386", PALE, 1, "#5a6a4a"),
      row("phonePlain", "12:35", "1105424", PALE, 1, "#5a6a4a")
    ]
  },
  {
    name: "RYAN, Sarah (Miss)",
    title: "Sarah Ryan - Nurse Beaconsfield Road Site - Mond...",
    navy: true,
    rows: [
      clean("08:30"),
      note("Take doppler with you today, SR"),
      note("ROOM 2"),
      row("L", "08:40", "10949", BROWN, 4, "#fff"),
      note("pt came to harold road he is on his way", 4),
      row("", "09:20", "", WHITE),
      row("L", "09:30", "510495", "#ae3aa8", 3, "#fff"),
      row("L", "10:00", "1111291", LEAF, 3),
      tea("10:30"),
      row("L", "10:40", "2779", ORANGE),
      row("L", "10:45", "608937", "#707070", 1, "#fff"),
      row("L", "10:50", "11372", ORANGE),
      row("L", "11:00", "1100635", WHITE),
      row("L", "11:10", "609041", ORANGE),
      row("L", "11:15", "1100635", PINK),
      row("L", "11:20", "511073", ORANGE),
      row("L", "11:30", "508005", BROWN, 4, "#fff"),
      row("", "", "", BROWN, 2)
    ]
  },
  {
    name: "ENCEA, Fanel Gigel (Mr)",
    title: "Gigi Nurse Harold Road Site - Monday (09:00-18:00)",
    rows: [
      row("house", "09:00", "506915", MINT),
      row("house", "09:10", "1110281", MINT),
      row("house", "09:20", "35558", MINT),
      row("house", "09:30", "31735", MINT),
      row("house", "09:40", "1111537", MINT),
      row("house", "09:50", "501515", MINT),
      row("house", "10:00", "502379", MINT),
      row("house", "10:10", "511059", MINT),
      row("house", "10:20", "28669", MINT),
      row("house", "10:30", "13233", MINT),
      row("house", "10:40", "1111471", MINT),
      row("house", "10:50", "506161", MINT),
      row("house", "11:00", "10975", MINT),
      row("house", "11:10", "502027", MINT),
      row("house", "11:20", "504583", MINT),
      row("house", "11:30", "511312", VIOLET),
      row("house", "11:40", "511311", VIOLET),
      row("house", "11:50", "511314", VIOLET),
      row("house", "12:00", "511315", VIOLET),
      row("house", "12:10", "511316", VIOLET),
      row("house", "12:20", "511317", VIOLET),
      row("house", "12:30", "511295", SAGE),
      row("house", "12:40", "511297", SAGE),
      clean("12:50"),
      row("", "13:00", "Lunch Break", SLATE),
      row("", "13:10", "Lunch Break", SLATE),
      row("", "13:20", "Lunch Break", SLATE),
      row("house", "13:30", "511298", SAGE),
      row("house", "13:40", "511299", SAGE),
      row("house", "13:50", "511300", SAGE),
      row("house", "14:00", "511318", "#0078c4")
    ]
  },
  {
    name: "RADIA, Chandni (Dr)",
    title: "Dr Chandni Radia - WFH AM/ Beaconsfield Road Sit...",
    navy: true,
    rows: [
      row("phoneRed", "09:00", "610516", WHITE, 1, "#1ea7e8"),
      note("booked F2F"),
      row("phone", "09:05", "23278", WHITE, 1, "#1ea7e8"),
      row("phone", "09:10", "609532", DUSK),
      row("phone", "09:15", "504419", TEAL),
      row("phone", "09:20", "11858", DUSK),
      row("phone", "09:25", "1100528", DUSK),
      row("phone", "09:30", "1107671", TEAL),
      row("phone", "09:35", "1100677", TEAL),
      row("phone", "09:40", "1107402", TEAL),
      row("phone", "09:50", "1103834", TEAL),
      row("phone", "10:00", "30638", TEAL),
      row("phone", "10:10", "16063", TEAL),
      row("phone", "10:20", "22860", TEAL),
      row("phone", "10:30", "1101361", TEAL),
      row("doc", "10:40", "Admin", MAUVE),
      row("doc", "10:45", "Admin", MAUVE),
      row("doc", "10:50", "Admin", MAUVE),
      row("doc", "10:55", "Admin", MAUVE),
      row("L", "11:00", "11858", LIME, 2),
      { ...row("", "11:20", "Fairlight Village Hall GP  TO BOOK ONLY", "#c5006c", 2, "#fff"), tight: true },
      row("L", "11:40", "30638", LIME, 2),
      row("L", "12:00", "1103834", LIME, 2),
      row("L", "12:20", "16063", LIME, 2),
      row("", "", "", SLATE, 3)
    ]
  }
];

const holders: [string, boolean][] = [
  ["TELEPHONE, Triage (Ms)", true],
  ["LIST, Cancellation (Mr)", true],
  ["DOCTOR, Duty (Dr)", true],
  ["BLANK, NHS 111 (Dr)", true],
  ["CARE CO, GP ASSISTA...", true],
  ["CALLS, Rough Sleepers...", false],
  ["ARRIVALS, Egton (Mr)", false],
  ["ENHANCED ACCESS, E...", false],
  ["HAROLD ROAD, East H...", false],
  ["CASTRO, Erwin (Mr)", true],
  ["DANN, Anthony (Dr)", true],
  ["GILLESPIE, John (Dr)", true],
  ["FERMOR, Janine (Mrs)", true],
  ["FOSTER, Kate (Ms)", false],
  ["HASSAN, Nadiya (Dr)", false],
  ["HATAMI, Lucy (Miss)", true],
  ["LOOBY, Paisley (Ms)", true],
  ["HUMPHREYS, Fiona (Dr)", false],
  ["JANI, Punyaja (Miss)", false],
  ["JANNEH, Jankeh (Ms)", false],
  ["KONDOR, Karthik (Mr)", false],
  ["LOCUM, Locum (Dr)", false],
  ["LOCUM, Locum (Mr)", false],
  ["MAGASIN, Marilinda (Mrs)", true],
  ["MARTINEZ, Peter (Mr)", false]
];

const weeks = [
  [27, 28, 29, 30, 31, 1, 2],
  [3, 4, 5, 6, 7, 8, 9],
  [10, 11, 12, 13, 14, 15, 16],
  [17, 18, 19, 20, 21, 22, 23],
  [24, 25, 26, 27, 28, 29, 30],
  [1, 2, 3, 4, 5, 6, 7]
];

const messages: { label: string; count: string; urgent?: string }[] = [
  { label: "Report Management", count: "36" },
  { label: "SCR", count: "7" },
  { label: "Test Requests", count: "603" },
  { label: "Referrals", count: "3", urgent: "(1)" },
  { label: "Documents", count: "369" },
  { label: "GP2GP", count: "33", urgent: "(33)" },
  { label: "Medicine Management", count: "112", urgent: "(13)" },
  { label: "Registration", count: "313" },
  { label: "Lab Reports", count: "173", urgent: "(123)" },
  { label: "Tasks", count: "35", urgent: "(5)" }
];

const slotIcon = (kind?: Kind) => {
  switch (kind) {
    case "L":
      return <LetterIcon>L</LetterIcon>;
    case "D":
      return <LetterIcon $grey>D</LetterIcon>;
    case "phone":
      return <PhoneIcon />;
    case "phonePlain":
      return <PhoneIcon plain />;
    case "phoneRed":
      return <PhoneIcon red />;
    case "house":
      return <HouseIcon />;
    case "atom":
      return <AtomIcon />;
    case "doc":
      return <DocIcon />;
    default:
      return null;
  }
};

const isStruck = (kind?: Kind) =>
  kind === "L" || kind === "phone" || kind === "phonePlain" || kind === "phoneRed" || kind === "house";

const Ribbons = () => (
  <Ribbon>
    <Group $w={133}>
      <GroupBody>
        <BigButton $w={44}>
          <BigIcon $low><Lens /></BigIcon>
          Find
          <br />
          Slot
          <DropArrow />
        </BigButton>
        <BigButton $w={38}>
          <BigIcon $low><BookIcon /></BigIcon>
          Book
          <br />
          <br />
          <DropArrow />
        </BigButton>
        <BigButton $w={44} $off>
          <BigIcon><CrossIcon /></BigIcon>
          Cancel
          <br />
          Appt
        </BigButton>
      </GroupBody>
      <GroupLabel>Book Appointment</GroupLabel>
    </Group>
    <Group $w={203}>
      <GroupBody>
        <BigButton $w={78}>
          <BigIcon $low><CalendarClock /></BigIcon>
          Patient
          <br />
          Appointments
          <DropArrow />
        </BigButton>
        <SmallColumn $w={122}>
          <SmallButton><SlotProps />Session Properties</SmallButton>
          <SmallButton><SlotProps />Slot Properties</SmallButton>
          <SmallButton><CreateIcon />Create Session</SmallButton>
        </SmallColumn>
      </GroupBody>
      <GroupLabel>Actions</GroupLabel>
    </Group>
    <Group $w={339}>
      <GroupBody>
        <BigButton $w={40} $on>
          <BigIcon><PlannerIcon label="1" /></BigIcon>
          Day
          <br />
          View
        </BigButton>
        <BigButton $w={42}>
          <BigIcon><PlannerIcon label="7" /></BigIcon>
          Week
          <br />
          View
        </BigButton>
        <SmallColumn $w={70}>
          <SmallButton $on><ClockIcon />All day</SmallButton>
          <SmallButton><ClockIcon half />AM Only</SmallButton>
          <SmallButton><ClockIcon half />PM Only</SmallButton>
        </SmallColumn>
        <SmallColumn $w={99}>
          <SmallButton $on><PrivacyIcon />Privacy</SmallButton>
          <SmallButton><ReallocIcon />Realloc. List</SmallButton>
          <SmallButton><SunIcon />Show Holidays</SmallButton>
        </SmallColumn>
        <SmallColumn $w={82}>
          <SmallButton><RefreshIcon />Refresh</SmallButton>
          <SmallButton><AssignTick />Assign. List</SmallButton>
        </SmallColumn>
      </GroupBody>
      <GroupLabel>View</GroupLabel>
    </Group>
    <Group $w={102}>
      <GroupBody>
        <BigButton $w={52}>
          <BigIcon $low><FunnelIcon /></BigIcon>
          Location
          <br />
          Filters
          <DropArrow />
        </BigButton>
        <BigButton $w={42}>
          <BigIcon><Lens /></BigIcon>
          Search
          <br />
          Book
        </BigButton>
      </GroupBody>
      <GroupLabel>Filters</GroupLabel>
    </Group>
    <Group $w={47}>
      <GroupBody>
        <BigButton $w={40}>
          <BigIcon $low><PrinterIcon /></BigIcon>
          Print
          <br />
          <br />
          <DropArrow />
        </BigButton>
      </GroupBody>
      <GroupLabel>Print</GroupLabel>
    </Group>
    <Group $w={46}>
      <GroupBody>
        <BigButton $w={40}>
          <BigIcon><GearIcon /></BigIcon>
          Appts
          <br />
          Config
        </BigButton>
      </GroupBody>
      <GroupLabel>Config</GroupLabel>
    </Group>
    <Group $w={58}>
      <GroupBody>
        <BigButton $w={52}>
          <BigIcon><LocalIcon /></BigIcon>
          Local
          <br />
          Services
        </BigButton>
      </GroupBody>
      <GroupLabel>Open</GroupLabel>
    </Group>
  </Ribbon>
);

const AppointmentSidebar = () => (
  <Sidebar>
    <SideHead>
      Appointments
      <SideChevron>«</SideChevron>
    </SideHead>
    <DateCard>
      <DateHead>
        <ArrowSlot><GreenArrow /></ArrowSlot>
        <DateText>
          Monday
          <br />
          24-Jun-2024
        </DateText>
        <ArrowSlot><GreenArrow right /></ArrowSlot>
      </DateHead>
      <Calendar>
        <MonthBar>
          <MonthPart $w={90}>
            <MonthArrow>◄</MonthArrow>
            June
            <MonthArrow>►</MonthArrow>
          </MonthPart>
          <MonthPart $w={54}>
            <MonthArrow>◄</MonthArrow>
            2024
            <MonthArrow>►</MonthArrow>
          </MonthPart>
        </MonthBar>
        <DayGrid $head>
          {["Mo", "Tu", "We", "Th", "Fr", "Sa", "Su"].map(d => (
            <Day key={d}>{d}</Day>
          ))}
        </DayGrid>
        <DayGrid>
          {weeks.map((week, w) =>
            week.map((d, i) => (
              <Day
                key={`${w}-${i}`}
                $muted={(w === 0 && i < 5) || w === 5}
                $today={w === 4 && i === 0}
              >
                {d}
              </Day>
            ))
          )}
        </DayGrid>
        <TodayLink>Today</TodayLink>
      </Calendar>
    </DateCard>
    <FilterCard>
      <FilterTitle>Session Holder Filters</FilterTitle>
      <FilterBody>
        <HolderList>
          {holders.map(([name, on], i) => (
            <Holder key={i} $off={!on}>
              <Tick $show={on}>{on && <CheckMark />}</Tick>
              <UserIcon />
              <HolderName>{name}</HolderName>
            </Holder>
          ))}
        </HolderList>
        <SideScroll>
          <ScrollArrow><Caret dir="up" /></ScrollArrow>
          <SideThumb />
          <ScrollGap />
          <ScrollArrow><Caret dir="down" /></ScrollArrow>
        </SideScroll>
      </FilterBody>
    </FilterCard>
  </Sidebar>
);

const ScheduleGrid = () => (
  <GridArea>
    <NameRow>
      {columns.map(c => (
        <NameHead key={c.name}>
          {c.name}
          <NameChevron>»</NameChevron>
        </NameHead>
      ))}
    </NameRow>
    <BodyRow>
      <ColumnsClip>
        {columns.map(c => (
          <Column key={c.name}>
            <SlotTitle $navy={c.navy}>
              {c.title}
              <Collapse><ChevronsUp /></Collapse>
            </SlotTitle>
            <HeadRow>
              <HeadCell />
              <HeadCell>Time</HeadCell>
              <HeadCell $pad={10}>Description / Patient Name</HeadCell>
            </HeadRow>
            {c.rows.map((r, i) =>
              r.note ? (
                <NoteRow key={i} $span={r.span ?? 1} $tight={r.tight}>{r.note}</NoteRow>
              ) : (
                <Slot key={i} $span={r.span ?? 1}>
                  <IconCell>{slotIcon(r.icon)}</IconCell>
                  <TimeCell $struck={isStruck(r.icon)}>{r.time}</TimeCell>
                  <DescCell
                    $bg={r.bg ?? WHITE}
                    $fg={r.fg ?? "#111"}
                    $struck={isStruck(r.icon)}
                    $tight={r.tight}
                  >
                    {r.text}
                  </DescCell>
                </Slot>
              )
            )}
          </Column>
        ))}
      </ColumnsClip>
      <VScroll>
        <ScrollArrow><Caret dir="up" /></ScrollArrow>
        <VThumb />
        <ScrollGap />
        <ScrollArrow><Caret dir="down" /></ScrollArrow>
      </VScroll>
    </BodyRow>
    <HScroll>
      <HArrowLeft><Caret dir="left" /></HArrowLeft>
      <HThumb />
      <HArrowRight><Caret dir="right" /></HArrowRight>
    </HScroll>
  </GridArea>
);

export default () => (
  <Page>
    <GlobalStyle />
    <TitleBar>
      <QuickBar>
        {Array.from({ length: 13 }, (_, i) => (
          <QuickIcon key={i} kind={i} />
        ))}
      </QuickBar>
      <QuickArrow>▾</QuickArrow>
      <WindowTitle>EMIS Web Health Care System - The Hill Surgery - 1038</WindowTitle>
      <WindowControls>
        <span>–</span>
        <span>❐</span>
        <span>X</span>
      </WindowControls>
    </TitleBar>
    <TabRow>
      <Tab $active>Appointment Book</Tab>
      <Tab>Week Templates</Tab>
      <Tab>Planner</Tab>
      <Tab>Holidays and Closures</Tab>
      <Tab>Appointment Reporting</Tab>
      <Tab>General Practice Workload Tool</Tab>
      <TabTools>
        <BlueCal />
        <HelpDot />
        <EmisXBox>EMIS X</EmisXBox>
        <AlertDot>!</AlertDot>
      </TabTools>
    </TabRow>
    <Ribbons />
    <LinkRow>
      {messages.map(m => (
        <LinkItem key={m.label} $urgent={!!m.urgent}>
          <MsgLink>{m.label}</MsgLink>
          {`  - ${m.count}`}
          {m.urgent && <Urgent>{`  ${m.urgent}`}</Urgent>}
        </LinkItem>
      ))}
    </LinkRow>
    <Banner>
      <BannerTick />
      All resources (clinical templates, document templates, protocols and concepts) have downloaded and are up to date.
      <BannerClose>X</BannerClose>
    </Banner>
    <Work>
      <AppointmentSidebar />
      <ScheduleGrid />
    </Work>
    <StatusBar>
      <NhsBox>NHS</NhsBox>
      <DbIcon />
      <StatusText $ml={14}>Clinical Practitioner</StatusText>
      <StatusText $ml={20}>|</StatusText>
      <StatusLink $ml={12}>PARKER, Linda (Dr)</StatusLink>
      <StatusText $ml={17}>|</StatusText>
      <StatusText $ml={13}>Organisation: The Hill Surgery</StatusText>
      <StatusText $ml={12}>|</StatusText>
      <StatusText $ml={16}>Location:  Harold Road Site</StatusText>
      <StatusText $ml={20}>|</StatusText>
      <StatusAvailable>
        <AvailableTick />
        Available
      </StatusAvailable>
    </StatusBar>
    <TaskBar>
      <StartButton><FaWindows size={17} /></StartButton>
      <SearchBox>
        <Search size={18} strokeWidth={1.4} color="#222" style={{ transform: "scaleX(-1)" }} />
        Type here to search
      </SearchBox>
      <TaskIcons>
        <TaskSlot><TaskViewIcon /></TaskSlot>
        <TaskSlot><ExplorerIcon /></TaskSlot>
        <TaskSlot><EdgeIcon /></TaskSlot>
        <TaskSlot><ChromeIcon /></TaskSlot>
        <TaskSlot $run><TealApp /></TaskSlot>
        <TaskSlot $run><NavyApp /></TaskSlot>
        <TaskSlot $run $active><EmisApp /></TaskSlot>
        <TaskSlot $run><XApp /></TaskSlot>
        <TaskSlot $run><Settings size={22} color="#fff" strokeWidth={2.4} /></TaskSlot>
        <TaskSlot $run><WordIcon /></TaskSlot>
      </TaskIcons>
      <Tray>
        <ChevronUp size={16} color="#fff" />
        <PlugIcon />
        <Wifi size={16} color="#c0c6cc" />
        <Volume2 size={16} color="#fff" />
        <Clock>
          21:17
          <br />
          27/07/2024
        </Clock>
        <NotifyIcon>
          <MessageSquareMore size={20} color="#fff" fill="#fff" />
          <NotifyBadge>2</NotifyBadge>
        </NotifyIcon>
      </Tray>
    </TaskBar>
    <Orb>emis</Orb>
    <TealWidget>
      <TealDots>
        <TealDot />
        <TealDot />
        <TealDot />
      </TealDots>
      <TealCell><MessageSquareMore size={26} strokeWidth={1.8} /></TealCell>
      <TealCell><Video size={26} strokeWidth={1.8} /></TealCell>
      <TealCell>
        <MailOpen size={26} strokeWidth={1.8} />
        <TealBadge>44</TealBadge>
      </TealCell>
      <TealCell>LP</TealCell>
    </TealWidget>
  </Page>
);
